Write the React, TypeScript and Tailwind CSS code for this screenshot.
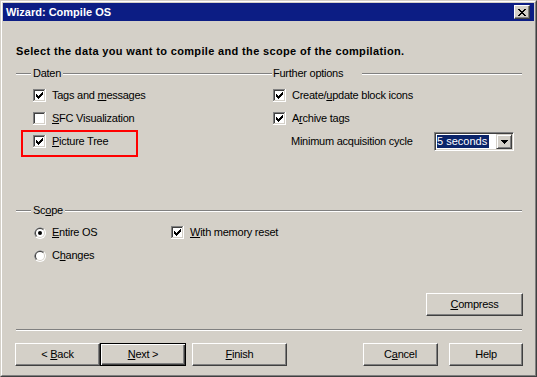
import type { ReactNode } from "react";

function CheckBox({ checked = false }: { checked?: boolean }) {
  return (
    <svg width="13" height="13" viewBox="0 0 13 13" shapeRendering="crispEdges" className="shrink-0">
      <rect width="13" height="13" fill="#fff" />
      <rect width="12" height="1" fill="#808080" />
      <rect width="1" height="12" fill="#808080" />
      <rect x="1" y="1" width="10" height="1" fill="#404040" />
      <rect x="1" y="1" width="1" height="10" fill="#404040" />
      <rect x="1" y="11" width="11" height="1" fill="#d4d0c8" />
      <rect x="11" y="1" width="1" height="11" fill="#d4d0c8" />
      {checked &&
        [5, 6, 7, 6, 5, 4, 3].map((y, i) => (
          <rect key={i} x={3 + i} y={y} width="1" height="3" fill="#000" />
        ))}
    </svg>
  );
}

function Radio({ checked = false }: { checked?: boolean }) {
  return (
    <svg width="12" height="12" viewBox="0 0 12 12" className="ml-px shrink-0">
      <circle cx="6" cy="6" r="6" fill="#fff" />
      <path d="M1.76 10.24A6 6 0 0 1 10.24 1.76Z" fill="#808080" />
      <circle cx="6" cy="6" r="5" fill="#d4d0c8" />
      <path d="M2.46 9.54A5 5 0 0 1 9.54 2.46Z" fill="#404040" />
      <circle cx="6" cy="6" r="4" fill="#fff" />
      {checked && <circle cx="6" cy="6" r="2" fill="#000" />}
    </svg>
  );
}

function Etch({ className = "" }: { className?: string }) {
  return <div className={`h-0 border-t border-b border-t-[#808080] border-b-white ${className}`} />;
}

function Btn({
  children,
  className = "",
  isDefault = false,
}: {
  children: ReactNode;
  className?: string;
  isDefault?: boolean;
}) {
  const edge = isDefault
    ? "border border-black shadow-[inset_1px_1px_#fff,inset_-1px_-1px_#404040,inset_-2px_-2px_#808080]"
    : "border border-t-white border-l-white border-r-[#404040] border-b-[#404040] shadow-[inset_-1px_-1px_#808080]";
  return (
    <button
      type="button"
      className={`flex h-[23px] shrink-0 items-center justify-center bg-[#d4d0c8] ${edge} ${className}`}
    >
      {children}
    </button>
  );
}

function Row({ children, className = "" }: { children: ReactNode; className?: string }) {
  return <div className={`flex h-[13px] items-center gap-[6px] ${className}`}>{children}</div>;
}

export default function App() {
  return (
    <div className="h-[377px] w-[537px] border border-t-[#d4d0c8] border-l-[#d4d0c8] border-r-[#404040] border-b-[#404040] bg-[#d4d0c8] font-['Liberation_Sans',Arial,sans-serif] text-[11px] leading-[13px] tracking-[-0.25px] text-black">
      <div className="flex h-full flex-col border border-t-white border-l-white border-r-[#808080] border-b-[#808080] p-px">
        {/* title bar */}
        <div className="flex h-[18px] shrink-0 items-center justify-between bg-[#0c1d84] pl-[3px] pr-[4px]">
          <span className="font-bold tracking-normal text-white">Wizard: Compile OS</span>
          <button
            type="button"
            className="flex h-[14px] w-[16px] items-center justify-center border border-t-white border-l-white border-r-[#404040] border-b-[#404040] bg-[#d4d0c8] shadow-[inset_-1px_-1px_#808080]"
          >
            <svg width="8" height="7" viewBox="0 0 8 7" shapeRendering="crispEdges">
              <path d="M0 0h2v1H0zM6 0h2v1H6zM1 1h2v1H1zM5 1h2v1H5zM2 2h4v1H2zM3 3h2v1H3zM2 4h4v1H2zM1 5h2v1H1zM5 5h2v1H5zM0 6h2v1H0zM6 6h2v1H6z" fill="#000" />
            </svg>
          </button>
        </div>

        <div className="flex flex-1 flex-col pl-[13px] pr-[12px]">
          <p className="mt-[24px] font-bold tracking-[0.35px]">
            Select the data you want to compile and the scope of the compilation.
          </p>

          {/* group headers */}
          <div className="mt-[9px] flex h-[13px] items-center">
            <div className="flex w-[256px] items-center">
              <Etch className="w-[15px]" />
              <span className="px-[2px]">Daten</span>
              <Etch className="flex-1" />
            </div>
            <span className="ml-px w-[89px]">Further options</span>
            <Etch className="flex-1" />
          </div>

          <div className="mt-[9px] flex">
            <div className="flex w-[257px] flex-col gap-[10px] pl-[17px]">
              <Row>
                <CheckBox checked />
                <span>
                  Tags and <u>m</u>essages
                </span>
              </Row>
              <Row>
                <CheckBox />
                <span>
                  <u>S</u>FC Visualization
                </span>
              </Row>
              <Row className="relative">
                <CheckBox checked />
                <span>
                  <u>P</u>icture Tree
                </span>
                <div className="absolute left-[-12px] top-[-5px] h-[27px] w-[117px] border-2 border-[#f00]" />
              </Row>
            </div>
            <div className="flex flex-1 flex-col gap-[10px]">
              <Row>
                <CheckBox checked />
                <span>
                  Create/<u>u</u>pdate block icons
                </span>
              </Row>
              <Row>
                <CheckBox checked />
                <span>
                  A<u>r</u>chive tags
                </span>
              </Row>
              <div className="flex h-[13px] items-center pl-[18px]">
                <span className="w-[143px] shrink-0">Minimum acquisition cycle</span>
                <div className="flex h-[19px] w-[80px] shrink-0 border border-t-[#808080] border-l-[#808080] border-r-white border-b-white bg-white p-px shadow-[inset_1px_1px_#404040,inset_-1px_-1px_#d4d0c8]">
                  <span className="ml-px self-center bg-[#0a246a] pr-[2px] tracking-normal text-white">5 seconds</span>
                  <div className="ml-auto flex w-[16px] items-center justify-center border border-t-[#d4d0c8] border-l-[#d4d0c8] border-r-[#404040] border-b-[#404040] bg-[#d4d0c8] shadow-[inset_1px_1px_#fff,inset_-1px_-1px_#808080]">
                    <svg width="7" height="4" viewBox="0 0 7 4" shapeRendering="crispEdges">
                      <path d="M0 0h7v1H0zM1 1h5v1H1zM2 2h3v1H2zM3 3h1v1H3z" fill="#000" />
                    </svg>
                  </div>
                </div>
              </div>
            </div>
          </div>

          {/* scope */}
          <div className="mt-[56px] flex h-[13px] items-center">
            <Etch className="w-[15px]" />
            <span className="px-[2px]">
              Sc<u>o</u>pe
            </span>
            <Etch className="flex-1" />
          </div>
          <div className="mt-[9px] flex flex-col gap-[10px] pl-[17px]">
            <div className="flex h-[13px] items-center">
              <Row className="w-[138px]">
                <Radio checked />
                <span>
                  <u>E</u>ntire OS
                </span>
              </Row>
              <Row>
                <CheckBox checked />
                <span>
                  <u>W</u>ith memory reset
                </span>
              </Row>
            </div>
            <Row>
              <Radio />
              <span>
                C<u>h</u>anges
              </span>
            </Row>
          </div>

          <div className="mr-[-1px] mt-[31px] flex justify-end">
            <Btn className="w-[97px]">
              <span>
                <u>C</u>ompress
              </span>
            </Btn>
          </div>

          <Etch className="mt-[13px]" />

          <div className="mx-[-1px] mt-[12px] flex">
            <Btn className="w-[85px]">
              <span>
                &lt; <u>B</u>ack
              </span>
            </Btn>
            <Btn isDefault className="w-[86px]">
              <span>
                <u>N</u>ext &gt;
              </span>
            </Btn>
            <Btn className="ml-[6px] w-[95px]">
              <span>
                <u>F</u>inish
              </span>
            </Btn>
            <Btn className="ml-auto w-[75px]">
              <span>
                C<u>a</u>ncel
              </span>
            </Btn>
            <Btn className="ml-[11px] w-[74px]">
              <span>Help</span>
            </Btn>
          </div>
        </div>
      </div>
    </div>
  );
}
